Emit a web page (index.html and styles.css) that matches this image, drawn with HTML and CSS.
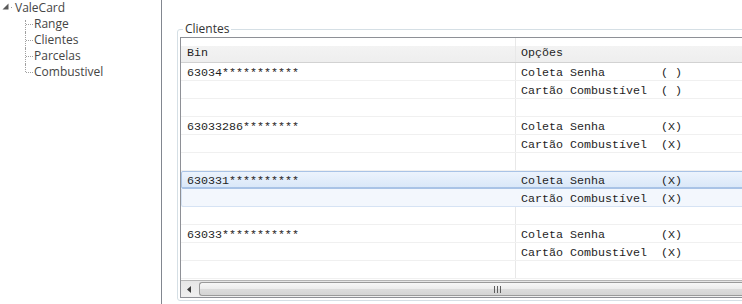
FILE: index.html
```html
<!DOCTYPE html>
<html lang="pt-BR">
<head>
    <meta charset="UTF-8">
    <title>ValeCard - Clientes</title>
    <link rel="stylesheet" href="styles.css">
</head>
<body>
    <div class="window">
        <aside class="tree-panel">
            <ul class="tree">
                <li class="root">
                    <div class="node-head">
                        <svg class="expander" width="15" height="16" viewBox="0 0 15 16">
                            <path d="M8.5 3.5 L8.5 9.5 L2.5 9.5 Z" fill="#5a5a5a"/>
                            <rect x="11" y="7" width="1" height="1" fill="#9a9a9a"/>
                        </svg>
                        <span>ValeCard</span>
                    </div>
                    <ul class="children">
                        <li>Range</li>
                        <li>Clientes</li>
                        <li>Parcelas</li>
                        <li>Combustivel</li>
                    </ul>
                </li>
            </ul>
        </aside>

        <main class="content">
            <fieldset class="group">
                <legend>Clientes</legend>
                <div class="grid">
                    <div class="grid-head">
                        <div class="cell bin">Bin</div>
                        <div class="cell opt">Opções</div>
                    </div>
                    <div class="grid-body">
                        <div class="row"><div class="cell bin">63034***********</div><div class="cell opt">Coleta Senha        ( )</div></div>
                        <div class="row"><div class="cell bin"></div><div class="cell opt">Cartão Combustível  ( )</div></div>
                        <div class="row"><div class="cell bin"></div><div class="cell opt"></div></div>

                        <div class="row"><div class="cell bin">63033286********</div><div class="cell opt">Coleta Senha        (X)</div></div>
                        <div class="row"><div class="cell bin"></div><div class="cell opt">Cartão Combustível  (X)</div></div>
                        <div class="row"><div class="cell bin"></div><div class="cell opt"></div></div>

                        <div class="row selected"><div class="cell bin">630331**********</div><div class="cell opt">Coleta Senha        (X)</div></div>
                        <div class="row selected-sub"><div class="cell bin"></div><div class="cell opt">Cartão Combustível  (X)</div></div>
                        <div class="row"><div class="cell bin"></div><div class="cell opt"></div></div>

                        <div class="row"><div class="cell bin">63033***********</div><div class="cell opt">Coleta Senha        (X)</div></div>
                        <div class="row"><div class="cell bin"></div><div class="cell opt">Cartão Combustível  (X)</div></div>
                        <div class="row"><div class="cell bin"></div><div class="cell opt"></div></div>
                    </div>
                    <div class="hscroll">
                        <div class="scroll-btn">
                            <svg width="4" height="7" viewBox="0 0 4 7"><path d="M4 0 L0 3.5 L4 7 Z" fill="#3c3c3c"/></svg>
                        </div>
                        <div class="thumb">
                            <div class="grip"><i></i><i></i><i></i></div>
                        </div>
                    </div>
                </div>
            </fieldset>
        </main>
    </div>
</body>
</html>
```

FILE: styles.css
```css
* {
    margin: 0;
    padding: 0;
    box-sizing: border-box;
}

body {
    font-family: 'Open Sans', sans-serif;
    font-size: 12px;
    background: #ffffff;
    color: #333;
    overflow: hidden;
}

.window {
    display: flex;
    height: 100vh;
}

/* Tree on the left */
.tree-panel {
    width: 162px;
    flex-shrink: 0;
    border-right: 1px solid #828790;
}

.tree {
    list-style: none;
    color: #454545;
}

.node-head {
    display: flex;
    align-items: center;
    height: 16px;
    line-height: 16px;
}

.expander {
    display: block;
    flex-shrink: 0;
}

.children {
    list-style: none;
    margin-left: 25px;
}

.children li {
    position: relative;
    height: 16px;
    line-height: 16px;
    padding-left: 9px;
}

.children li::before {
    content: '';
    position: absolute;
    left: 0;
    top: 0;
    bottom: 0;
    border-left: 1px dotted #a0a0a0;
}

.children li:first-child::before {
    top: 4px;
}

.children li:last-child::before {
    bottom: 8px;
}

.children li::after {
    content: '';
    position: absolute;
    left: 1px;
    top: 8px;
    width: 7px;
    border-top: 1px dotted #a0a0a0;
}

/* Group box */
.content {
    flex: 1;
    min-width: 0;
    overflow: hidden;
    padding-left: 15px;
}

.group {
    width: 640px;
    margin-top: 21px;
    padding: 0 2px 2px 2px;
    border: 1px solid #d5dfe5;
    border-radius: 3px;
}

.group legend {
    margin-left: 3px;
    padding: 0 2px;
    line-height: 16px;
    color: #333;
}

/* Data grid */
.grid {
    height: 261px;
    border: 1px solid #8e9096;
    display: flex;
    flex-direction: column;
    font-family: 'Liberation Mono', 'Courier New', monospace;
    font-size: 11.67px;
    color: #1e1e1e;
}

.grid-head {
    display: flex;
    height: 25px;
    border-bottom: 1px solid #d2d2d2;
    background: linear-gradient(#ffffff 0, #ffffff 8px, #f3f3f3 8px, #eeeeee 100%);
}

.grid-head .cell {
    padding-top: 7px;
    line-height: 17px;
}

.grid-head .bin {
    border-right-color: #dcdcdc;
}

.cell {
    white-space: pre;
}

.cell.bin {
    width: 335px;
    flex-shrink: 0;
    padding-left: 6px;
    border-right: 1px solid #e8e8e8;
}

.cell.opt {
    flex: 1;
    padding-left: 5px;
}

.grid-body {
    flex: 1;
}

.row {
    display: flex;
    height: 18px;
    line-height: 15px;
    border-bottom: 1px solid #f0f0f0;
}

.row .cell {
    padding-top: 3px;
}

.row.selected {
    background: linear-gradient(#edf4fd, #d9e7f8);
    border-bottom-color: #a9c3e6;
    box-shadow: inset 0 0 0 1px #a9c3e6;
    border-radius: 2px;
}

.row.selected-sub {
    background: #f3f7fd;
    border-bottom-color: #d6e3f4;
    box-shadow: inset 1px 0 0 #d6e3f4;
    border-radius: 0 0 2px 2px;
}

.row.selected .cell.bin,
.row.selected-sub .cell.bin {
    border-right-color: transparent;
}

/* Horizontal scrollbar */
.hscroll {
    display: flex;
    align-items: center;
    height: 17px;
    border-top: 1px solid #b4b4b4;
    background: linear-gradient(#e6e6e6, #f0f0f0);
}

.scroll-btn {
    width: 17px;
    height: 16px;
    display: flex;
    align-items: center;
    justify-content: center;
    padding-right: 2px;
}

.scroll-btn svg {
    display: block;
}

.thumb {
    flex: 1;
    height: 14px;
    margin-left: 1px;
    border: 1px solid #9a9a9a;
    border-right: none;
    border-radius: 3px 0 0 3px;
    background: linear-gradient(#f7f7f7 0%, #ececec 50%, #dcdcdc 51%, #d4d4d4 100%);
    display: flex;
    align-items: center;
}

.grip {
    display: flex;
    gap: 2px;
    margin-left: 294px;
}

.grip i {
    display: block;
    width: 1px;
    height: 7px;
    background: #5e5e5e;
}
```
